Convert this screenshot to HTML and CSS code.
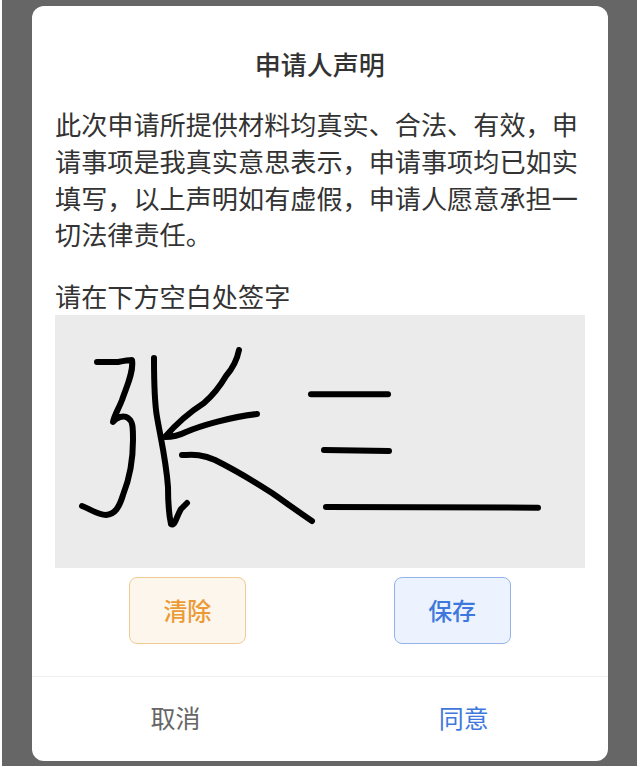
FILE: index.html
```html
<!DOCTYPE html>
<html lang="zh-CN">
<head>
  <meta charset="UTF-8" />
  <meta name="viewport" content="width=device-width, initial-scale=1.0"/>
  <title>申请人声明</title>
  <link rel="stylesheet" href="styles.css">
</head>
<body>
  <div class="mask">
    <div class="dialog">
      <div class="dialog-body">
        <h1 class="title">申请人声明</h1>
        <p class="statement">此次申请所提供材料均真实、合法、有效&#65292;申请事项是我真实意思表示&#65292;申请事项均已如实填写&#65292;以上声明如有虚假&#65292;申请人愿意承担一切法律责任。</p>
        <div class="sign-label">请在下方空白处签字</div>
        <svg class="sign-pad" viewBox="55 315 530 253" xmlns="http://www.w3.org/2000/svg">
          <g fill="none" stroke="#000" stroke-width="6" stroke-linecap="round" stroke-linejoin="round">
            <path d="M97 362L118 362Q128 360 132 360C134 372 126 388 122 400C119 408 114 416 113 422C116 417 124 415 128 418C133 421 133 428 133 440C133 465 129 480 123 495C119 508 115 514 106 515C98 515 90 509 82 506"/>
            <path d="M154 358C154 380 154 400 157 417C161 440 166 460 168 487C168 500 169 515 171 524C175 527 177 515 181 509L187 503"/>
            <path d="M239 350C237 360 233 368 226 376C219 388 212 396 204 403C190 412 176 424 165 437C172 437 178 436 186 432C200 426 230 417 257 414"/>
            <path d="M182 455C190 455 200 453 215 460C235 470 255 482 272 493C285 502 300 513 312 521"/>
            <path d="M311 394.3L388 394.3"/>
            <path d="M324 450L389 451"/>
            <path d="M326 507L538 507.7"/>
          </g>
        </svg>
        <div class="sign-actions">
          <button class="sign-btn sign-btn-clear">清除</button>
          <button class="sign-btn sign-btn-save">保存</button>
        </div>
      </div>
      <div class="dialog-footer">
        <button class="footer-btn">取消</button>
        <button class="footer-btn footer-btn-ok">同意</button>
      </div>
    </div>
  </div>
</body>
</html>
```

FILE: styles.css
```css
* {
  padding: 0;
  margin: 0;
  box-sizing: border-box;
}
body {
  width: 640px;
  height: 767px;
  padding: 0 3px 1px 2px;
  background: #fff;
  overflow: hidden;
  font-family: "Noto Sans CJK SC", "Noto Sans", sans-serif;
}
button {
  font-family: inherit;
  background: none;
  border: 0;
}

.mask {
  height: 100%;
  padding: 6px 29px 5px 29.5px;
  background: #666;
}
.dialog {
  height: 100%;
  display: flex;
  flex-direction: column;
  background: #fff;
  border-radius: 12px;
}
.dialog-body {
  flex: 1;
  padding: 40px 23.5px 0;
}

.title {
  font-size: 26px;
  line-height: 36px;
  font-weight: 500;
  color: #333;
  text-align: center;
}
.statement {
  margin-top: 24px;
  font-size: 26.15px;
  line-height: 36.8px;
  color: #333;
}
.sign-label {
  margin-top: 24.6px;
  font-size: 26.15px;
  line-height: 36.8px;
  color: #333;
}
.sign-pad {
  display: block;
  width: 530px;
  height: 253px;
  background: #ebebeb;
}

.sign-actions {
  display: flex;
  justify-content: space-around;
  margin-top: 9px;
}
.sign-btn {
  width: 117px;
  height: 67px;
  padding-bottom: 2px;
  font-size: 24px;
  font-weight: 500;
  border-radius: 8px;
}
.sign-btn-clear {
  color: #ec9a35;
  background: #fdf6ec;
  border: 1px solid #f0cb94;
}
.sign-btn-save {
  color: #3f78dd;
  background: #ecf3fe;
  border: 1px solid #94b4e8;
}

.dialog-footer {
  display: flex;
  height: 85px;
  border-top: 1px solid #f0f0f0;
}
.footer-btn {
  flex: 1;
  padding-bottom: 4px;
  font-size: 25px;
  color: #666;
}
.footer-btn-ok {
  color: #3f78dd;
}
```
